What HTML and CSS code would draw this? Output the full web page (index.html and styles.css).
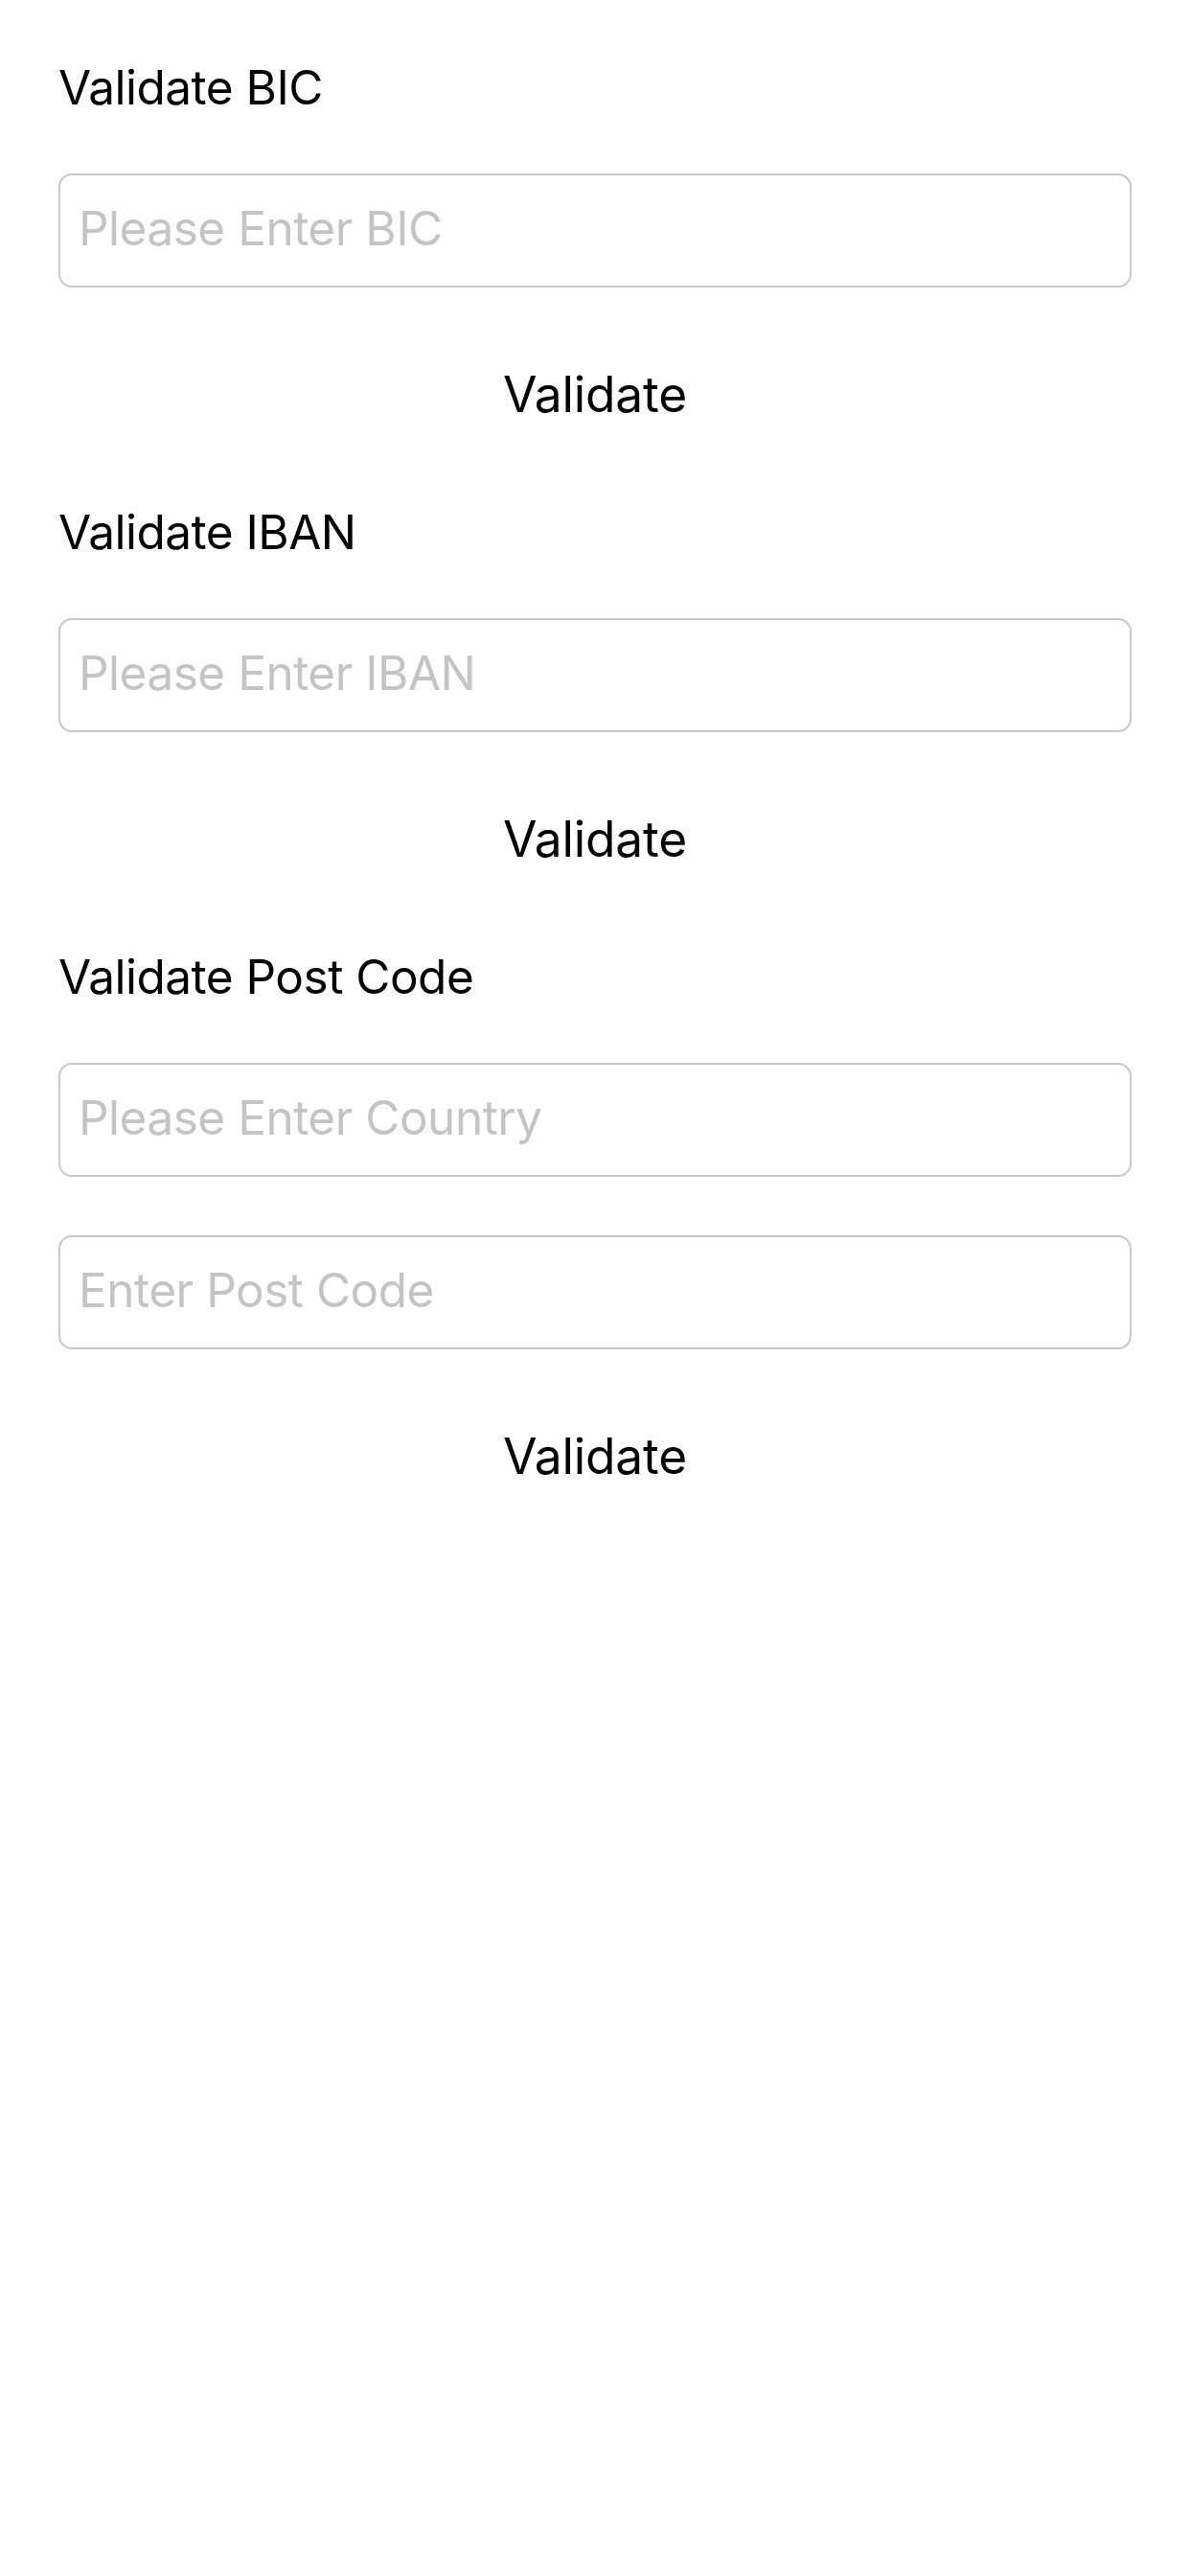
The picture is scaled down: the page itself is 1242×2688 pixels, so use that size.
FILE: index.html
```html
<!DOCTYPE html>
<html lang="en">
<head>
<meta charset="utf-8">
<title>Validate</title>
<link rel="stylesheet" href="styles.css">
</head>
<body>
<main class="page">
  <section class="section">
    <h2 class="label">Validate BIC</h2>
    <input class="field" type="text" placeholder="Please Enter BIC">
    <button class="validate" type="button">Validate</button>
  </section>
  <section class="section">
    <h2 class="label">Validate IBAN</h2>
    <input class="field" type="text" placeholder="Please Enter IBAN">
    <button class="validate" type="button">Validate</button>
  </section>
  <section class="section">
    <h2 class="label">Validate Post Code</h2>
    <input class="field" type="text" placeholder="Please Enter Country">
    <input class="field field-next" type="text" placeholder="Enter Post Code">
    <button class="validate" type="button">Validate</button>
  </section>
</main>
</body>
</html>
```

FILE: styles.css
```css
html, body {
  margin: 0;
  padding: 0;
  background: #ffffff;
}

body {
  width: 1242px;
  height: 2688px;
  font-family: Inter, "Liberation Sans", sans-serif;
  color: #000000;
}

.page {
  display: flex;
  flex-direction: column;
  padding: 61px 61px 0 61px;
}

.section {
  display: flex;
  flex-direction: column;
  margin-bottom: 84px;
}

.label {
  margin: 0;
  font-size: 49.5px;
  font-weight: 400;
  line-height: 60px;
  height: 60px;
  letter-spacing: -0.5px;
}

.field {
  box-sizing: border-box;
  width: 100%;
  height: 119px;
  margin: 60px 0 0 0;
  padding: 0 0 5px 19px;
  border: 2px solid #c9c9c9;
  border-radius: 14px;
  background: #ffffff;
  font-family: Inter, "Liberation Sans", sans-serif;
  font-size: 49.5px;
  letter-spacing: -0.5px;
  color: #000000;
  outline: none;
}

.field::placeholder {
  color: #c4c4c8;
  opacity: 1;
}

.field-next {
  margin-top: 61px;
}

.validate {
  align-self: center;
  margin: 81px 0 0 0;
  padding: 0;
  border: none;
  background: transparent;
  font-family: Inter, "Liberation Sans", sans-serif;
  font-size: 51.5px;
  line-height: 60px;
  height: 60px;
  letter-spacing: -0.2px;
  color: #000000;
}
```
